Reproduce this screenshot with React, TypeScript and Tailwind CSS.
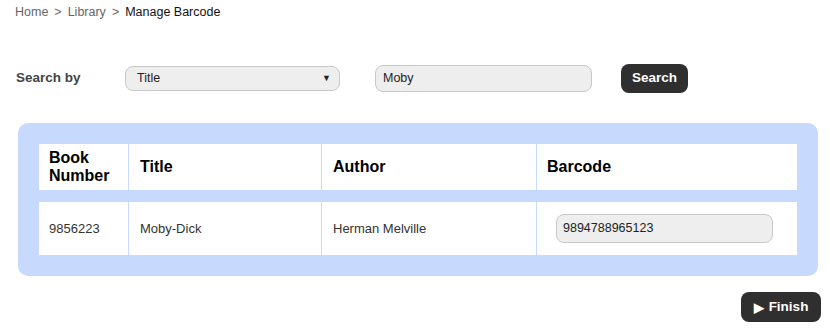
import React from 'react';

const rows = [
  { number: '9856223', title: 'Moby-Dick', author: 'Herman Melville', barcode: '9894788965123' },
];

export default function App() {
  return (
    <div className="w-[830px] h-[328px] bg-white font-['Liberation_Sans',Arial,sans-serif] text-[#333]">
      {/* breadcrumb */}
      <div className="pl-[15px] pt-[5px] h-[24px] text-[12.5px] leading-[15px]">
        <span className="text-[#666]">Home</span>
        <span className="text-[#666] mx-[6px]">&gt;</span>
        <span className="text-[#666]">Library</span>
        <span className="text-[#666] mx-[6px]">&gt;</span>
        <span className="text-[#111]">Manage Barcode</span>
      </div>

      {/* search */}
      <div className="flex items-center h-[30px] mt-[39px] pl-[16px]">
        <span className="w-[109px] text-[13.5px] font-bold text-[#444]">Search by</span>
        <div className="relative w-[215px] h-[25px] rounded-[8px] border border-[#c8c8c8] bg-[#eeeeee] flex items-center pl-[11px] text-[12.5px] text-[#222]">
          Title
          <span className="absolute right-[8px] top-[5px] text-[9px] text-[#222]">▼</span>
        </div>
        <div className="ml-[35px] w-[217px] h-[27px] rounded-[8px] border border-[#c8c8c8] bg-[#eeeeee] flex items-center pl-[7px] text-[12.5px] text-[#222]">
          Moby
        </div>
        <button className="ml-[29px] w-[67px] h-[29px] rounded-[8px] bg-[#2f2f2f] text-white text-[13.5px] font-bold">
          Search
        </button>
      </div>

      {/* table panel */}
      <div className="mx-[18px] mt-[30px] w-[800px] rounded-[10px] bg-[#c7d9fd] p-[21px] flex flex-col gap-[12px]">
        <div className="grid grid-cols-[89px_193px_215px_261px] h-[46px] bg-white text-[16px] font-bold text-black leading-[18px]">
          <div className="flex items-center pl-[10px]">Book<br />Number</div>
          <div className="flex items-center pl-[11px] border-l border-[#c7d9fd]">Title</div>
          <div className="flex items-center pl-[11px] border-l border-[#c7d9fd]">Author</div>
          <div className="flex items-center pl-[10px] border-l border-[#c7d9fd]">Barcode</div>
        </div>
        {rows.map((r) => (
          <div key={r.number} className="grid grid-cols-[89px_193px_215px_261px] h-[53px] bg-white text-[13px] text-[#333]">
            <div className="flex items-center pl-[10px]">{r.number}</div>
            <div className="flex items-center pl-[11px] border-l border-[#c7d9fd]">{r.title}</div>
            <div className="flex items-center pl-[11px] border-l border-[#c7d9fd]">{r.author}</div>
            <div className="flex items-center pl-[19px] border-l border-[#c7d9fd]">
              <div className="w-[217px] h-[29px] rounded-[8px] border border-[#c8c8c8] bg-[#eeeeee] flex items-center pl-[6px] text-[12.5px] text-[#222]">
                {r.barcode}
              </div>
            </div>
          </div>
        ))}
      </div>

      {/* finish */}
      <div className="flex justify-end pr-[9px] mt-[16px]">
        <button className="w-[80px] h-[30px] rounded-[8px] bg-[#2f2f2f] text-white text-[13.5px] font-bold flex items-center justify-center gap-[5px]">
          <span className="text-[13px] leading-none">▶</span>Finish
        </button>
      </div>
    </div>
  );
}
